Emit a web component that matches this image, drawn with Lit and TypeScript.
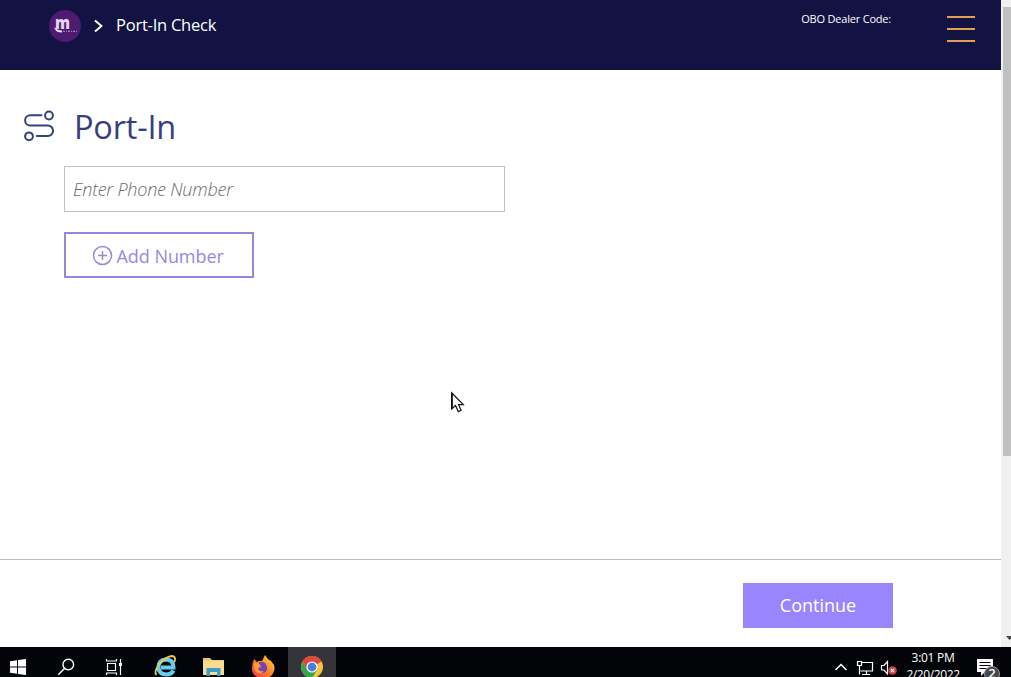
import { LitElement, html, css, svg } from 'lit';
import { customElement } from 'lit/decorators.js';

@customElement('app-header')
class AppHeader extends LitElement {
  static styles = css`
    :host { display: flex; height: 70px; flex: none; background: #121343; color: #fff; align-items: flex-start; box-sizing: border-box; padding: 9px 26px 0 48px; }
    .logo { width: 34px; height: 34px; flex: none; }
    .mark { font: 800 17px 'Open Sans', sans-serif; }
    .chev { width: 10px; height: 16px; margin: 9px 0 0 11px; flex: none; }
    .crumb { margin-left: 13px; font-size: 16.5px; line-height: 32px; letter-spacing: -0.23px; white-space: nowrap; }
    .space { flex: 1; }
    .dealer { font-size: 11px; line-height: 20px; margin-right: 56px; letter-spacing: -0.2px; white-space: nowrap; }
    .menu { display: grid; gap: 10px; width: 28px; padding-top: 7px; }
    .bar { height: 2px; background: #e3a052; }
  `;
  render() {
    return html`
      <svg class="logo" viewBox="0 0 34 34">
        <circle cx="17" cy="17" r="16" fill="#4d1b70" />
        <text class="mark" x="7" y="20" textLength="15" lengthAdjust="spacingAndGlyphs" fill="#e6d5ee">m</text>
        <path d="M6 18Q7 23.500 14 23.500V21.500Q9.500 21.500 6 18Z" fill="#eee2f5" />
        <path d="M15 22.300H29" stroke="#a27ab8" stroke-width="1.300" stroke-dasharray="2 1 1 1" />
      </svg>
      <svg class="chev" viewBox="0 0 10 16"><path d="M2 2.500L8.500 8L2 13.500" fill="none" stroke="#fff" stroke-width="2" /></svg>
      <span class="crumb">Port-In Check</span>
      <span class="space"></span>
      <span class="dealer">OBO Dealer Code:</span>
      <div class="menu"><div class="bar"></div><div class="bar"></div><div class="bar"></div></div>
    `;
  }
}

@customElement('port-form')
class PortForm extends LitElement {
  static styles = css`
    :host { display: block; flex: 1; min-height: 0; box-sizing: border-box; padding: 32px 0 0 22px; }
    .title { display: flex; align-items: center; height: 48px; color: #363f80; }
    .route { width: 34px; height: 34px; margin-right: 18px; }
    .heading { margin: 0; padding-top: 1px; font-size: 32.5px; font-weight: 400; line-height: 48px; letter-spacing: -0.2px; }
    .fields { display: flex; flex-direction: column; align-items: flex-start; gap: 20px; padding: 16px 0 0 42px; }
    .phone { box-sizing: border-box; width: 441px; height: 46px; border: 1px solid #c1c1c1; border-radius: 0; padding: 0 8px; font: italic 300 18px 'Open Sans', sans-serif; letter-spacing: -0.22px; background: #fff; outline: none; }
    .phone::placeholder { color: #6c6c6c; opacity: 1; }
    .add { box-sizing: border-box; width: 190px; height: 46px; border: 2px solid #9886de; background: #fff; color: #9987de; font: 400 18px 'Open Sans', sans-serif; display: flex; align-items: center; padding: 0 0 0 26px; gap: 3.5px; white-space: nowrap; }
    .label { padding-top: 2px; letter-spacing: -0.05px; }
    .plus { width: 21px; height: 21px; flex: none; }
  `;
  render() {
    return html`
      <div class="title">
        <svg class="route" viewBox="0 0 34 34" fill="none" stroke="currentColor" stroke-width="2" stroke-linecap="round">
          <path d="M19.500 6.300H8.200a5 5 0 0 0 0 10.200H25.800a5.200 5.200 0 0 1 0 10.500H14.800" />
          <circle cx="27" cy="6.500" r="3.900" /><circle cx="7" cy="27.300" r="3.900" />
        </svg>
        <h1 class="heading">Port-In</h1>
      </div>
      <div class="fields">
        <input class="phone" placeholder="Enter Phone Number" />
        <button class="add">
          <svg class="plus" viewBox="0 0 21 21" fill="none" stroke="currentColor" stroke-width="1.500"><circle cx="10.500" cy="10.500" r="9" /><path d="M10.500 6v9M6 10.500h9" /></svg>
          <span class="label">Add Number</span>
        </button>
      </div>
    `;
  }
}

const slots = [
  svg`<path fill="#fff" d="M10 14.300l7-1v6.200h-7zM18 13.100l8-1.100v7.500h-8zM10 20.500h7v6.300l-7-1zM18 20.500h8v7.500l-8-1.100z" />`,
  svg`<g fill="none" stroke="#fff" stroke-width="1.400"><circle cx="20.300" cy="17.500" r="5.300" /><path d="M16.500 21.500l-6.200 6.200" /></g>`,
  svg`<g fill="none" stroke="#fff" stroke-width="1.200"><path d="M11.500 16.500h8v7h-8zM10.500 12v2h10v-2M10.500 28v-2h10v2M24.500 12v16" /><path d="M23 17.500h3" stroke-width="3" /></g>`,
  svg`<path d="M29.500 23.500q-2 4-7.500 4q-7.500-.5-7.500-7.500t7.500-7.500q7.500 0 7.500 8H17" fill="none" stroke="#68cdf2" stroke-width="4" /><path d="M12.500 28q-3-3 3-11q6-7 12-8q5 0 3 6" fill="none" stroke="#ecc94a" stroke-width="1.900" />`,
  svg`<path fill="#e8c263" d="M11 11h7l2 2h12v15H11z" /><path fill="#f8dc92" d="M11 13.500h21v14.500H11z" /><path fill="#3e9dc8" d="M14.500 29v-8h14v8h-3.500v-4h-7v4z" />`,
  svg`<defs><linearGradient id="fire" x1="1" y1="0" x2="0" y2="1"><stop stop-color="#ffe14a" /><stop offset=".45" stop-color="#ff8a26" /><stop offset="1" stop-color="#ed2962" /></linearGradient></defs>
    <path fill="url(#fire)" d="M14 12l3 3q2-2 5-1l3-6q2 4 6 6q4 4 3.500 8q-2 10-12 9.500Q11 30 12 20q.5-4 2-8z" /><path fill="#7344b7" d="M19 15q7-1 8 5t-6 6q-5-2-3-5l4-1q-3-1-3-5z" /><path fill="#ff9d2d" d="M14 16q4-1 7 3l-3 2q1 4 6 3q-3 4-7 1.500T14 16z" />`,
  svg`<circle cx="24" cy="20" r="11" fill="#f3c53c" /><path fill="#da4a3d" d="M14.500 14.500A11 11 0 0 1 33.500 14.500L24 20z" /><path fill="#da4a3d" d="M24 14.500h9.500A11 11 0 0 0 14.500 14.500L19 23z" /><path fill="#37a352" d="M14.500 14.500A11 11 0 0 0 24 31l5-8-10-.3z" /><circle cx="24" cy="20" r="5.600" fill="#fff" /><circle cx="24" cy="20" r="4.400" fill="#4380df" />`,
];

@customElement('task-bar')
class TaskBar extends LitElement {
  static styles = css`
    :host { display: flex; height: 30px; flex: none; background: #020408; color: #fff; overflow: hidden; }
    .slot { width: 48px; height: 30px; flex: none; }
    .current { background: #353539; }
    .space { flex: 1; }
    .tray { width: 71px; height: 30px; flex: none; }
    .clock { width: 66px; height: 34px; flex: none; text-align: center; font: 400 12px/17px 'Open Sans', sans-serif; letter-spacing: -0.4px; padding-top: 2px; white-space: nowrap; }
    .time { letter-spacing: -0.3px; }
    .notes { width: 45px; height: 30px; flex: none; }
    .count { font: 600 13px 'Open Sans', sans-serif; }
  `;
  render() {
    return html`
      ${slots.map((icon, i) => html`<svg class="slot ${i === 6 ? 'current' : ''}" viewBox="0 0 48 30">${icon}</svg>`)}
      <span class="space"></span>
      <svg class="tray" viewBox="829 0 71 30" fill="none" stroke="#fff" stroke-width="1.200">
        <path d="M835.500 23l5.500-5.500l5.500 5.500" stroke-width="1.500" />
        <path d="M862 15.500h10.500v8.500H860.500M866.500 24v3.500M862 27.500h8M857.500 14.500h4v4h-4zM859.500 18.500v9" />
        <path d="M881.500 18.500h2.500l3.500-4v12.500l-3.500-4h-2.500z" />
        <circle cx="892.500" cy="23.500" r="4.300" fill="#d63c40" stroke="none" /><path d="M890.800 21.800l3.400 3.400m0-3.400l-3.400 3.400" />
      </svg>
      <div class="clock"><div class="time">3:01 PM</div><div>2/20/2022</div></div>
      <svg class="notes" viewBox="966 0 45 30">
        <path fill="#fff" d="M977 12h16v13h-8l-4 4v-4h-4z" /><path d="M979.500 15.500h11M979.500 18.500h11M979.500 21.500h7" stroke="#020408" stroke-width="1.200" />
        <circle cx="992" cy="27" r="7.500" fill="#45474b" stroke="#92949a" /><text class="count" x="992" y="31" text-anchor="middle" fill="#fff">2</text>
      </svg>
    `;
  }
}

@customElement('app-root')
class AppRoot extends LitElement {
  static styles = css`
    :host { display: flex; flex-direction: column; width: 1011px; height: 677px; overflow: hidden; position: relative; background: #fff; font-family: 'Open Sans', sans-serif; }
    .view { flex: 1; min-height: 0; display: flex; }
    .page { width: 1001px; display: flex; flex-direction: column; }
    .footer { box-sizing: border-box; height: 88px; flex: none; border-top: 1px solid #bdbdbd; display: flex; justify-content: flex-end; align-items: flex-start; padding: 23px 108px 0 0; }
    .go { box-sizing: border-box; width: 150px; height: 45px; border: 0; padding: 0 0 2px; background: #9985fd; color: #fff; font: 400 18px 'Open Sans', sans-serif; }
    .scroll { width: 10px; background: #f0f0f0; display: flex; flex-direction: column; justify-content: space-between; box-sizing: border-box; padding: 7px 0 6px 2px; }
    .thumb { height: 449px; background: #c0c0c0; }
    .down { width: 8px; height: 6px; }
    .cursor { position: absolute; left: 450px; top: 391px; width: 16px; height: 23px; }
  `;
  render() {
    return html`
      <div class="view">
        <div class="page">
          <app-header></app-header>
          <port-form></port-form>
          <div class="footer"><button class="go">Continue</button></div>
        </div>
        <div class="scroll">
          <div class="thumb"></div>
          <svg class="down" viewBox="0 0 8 6"><path d="M3 1h7L6.500 5z" fill="#444" /></svg>
        </div>
      </div>
      <task-bar></task-bar>
      <svg class="cursor" viewBox="0 0 16 23"><path d="M1.700 1.800V18l3.800-3.400 2.800 6 2.800-1.300-2.600-5.600h4.800z" fill="#fff" stroke="#111" stroke-width="1.200" /><path d="M1.900 2v16" stroke="#111" stroke-width="1.800" /></svg>
    `;
  }
}
